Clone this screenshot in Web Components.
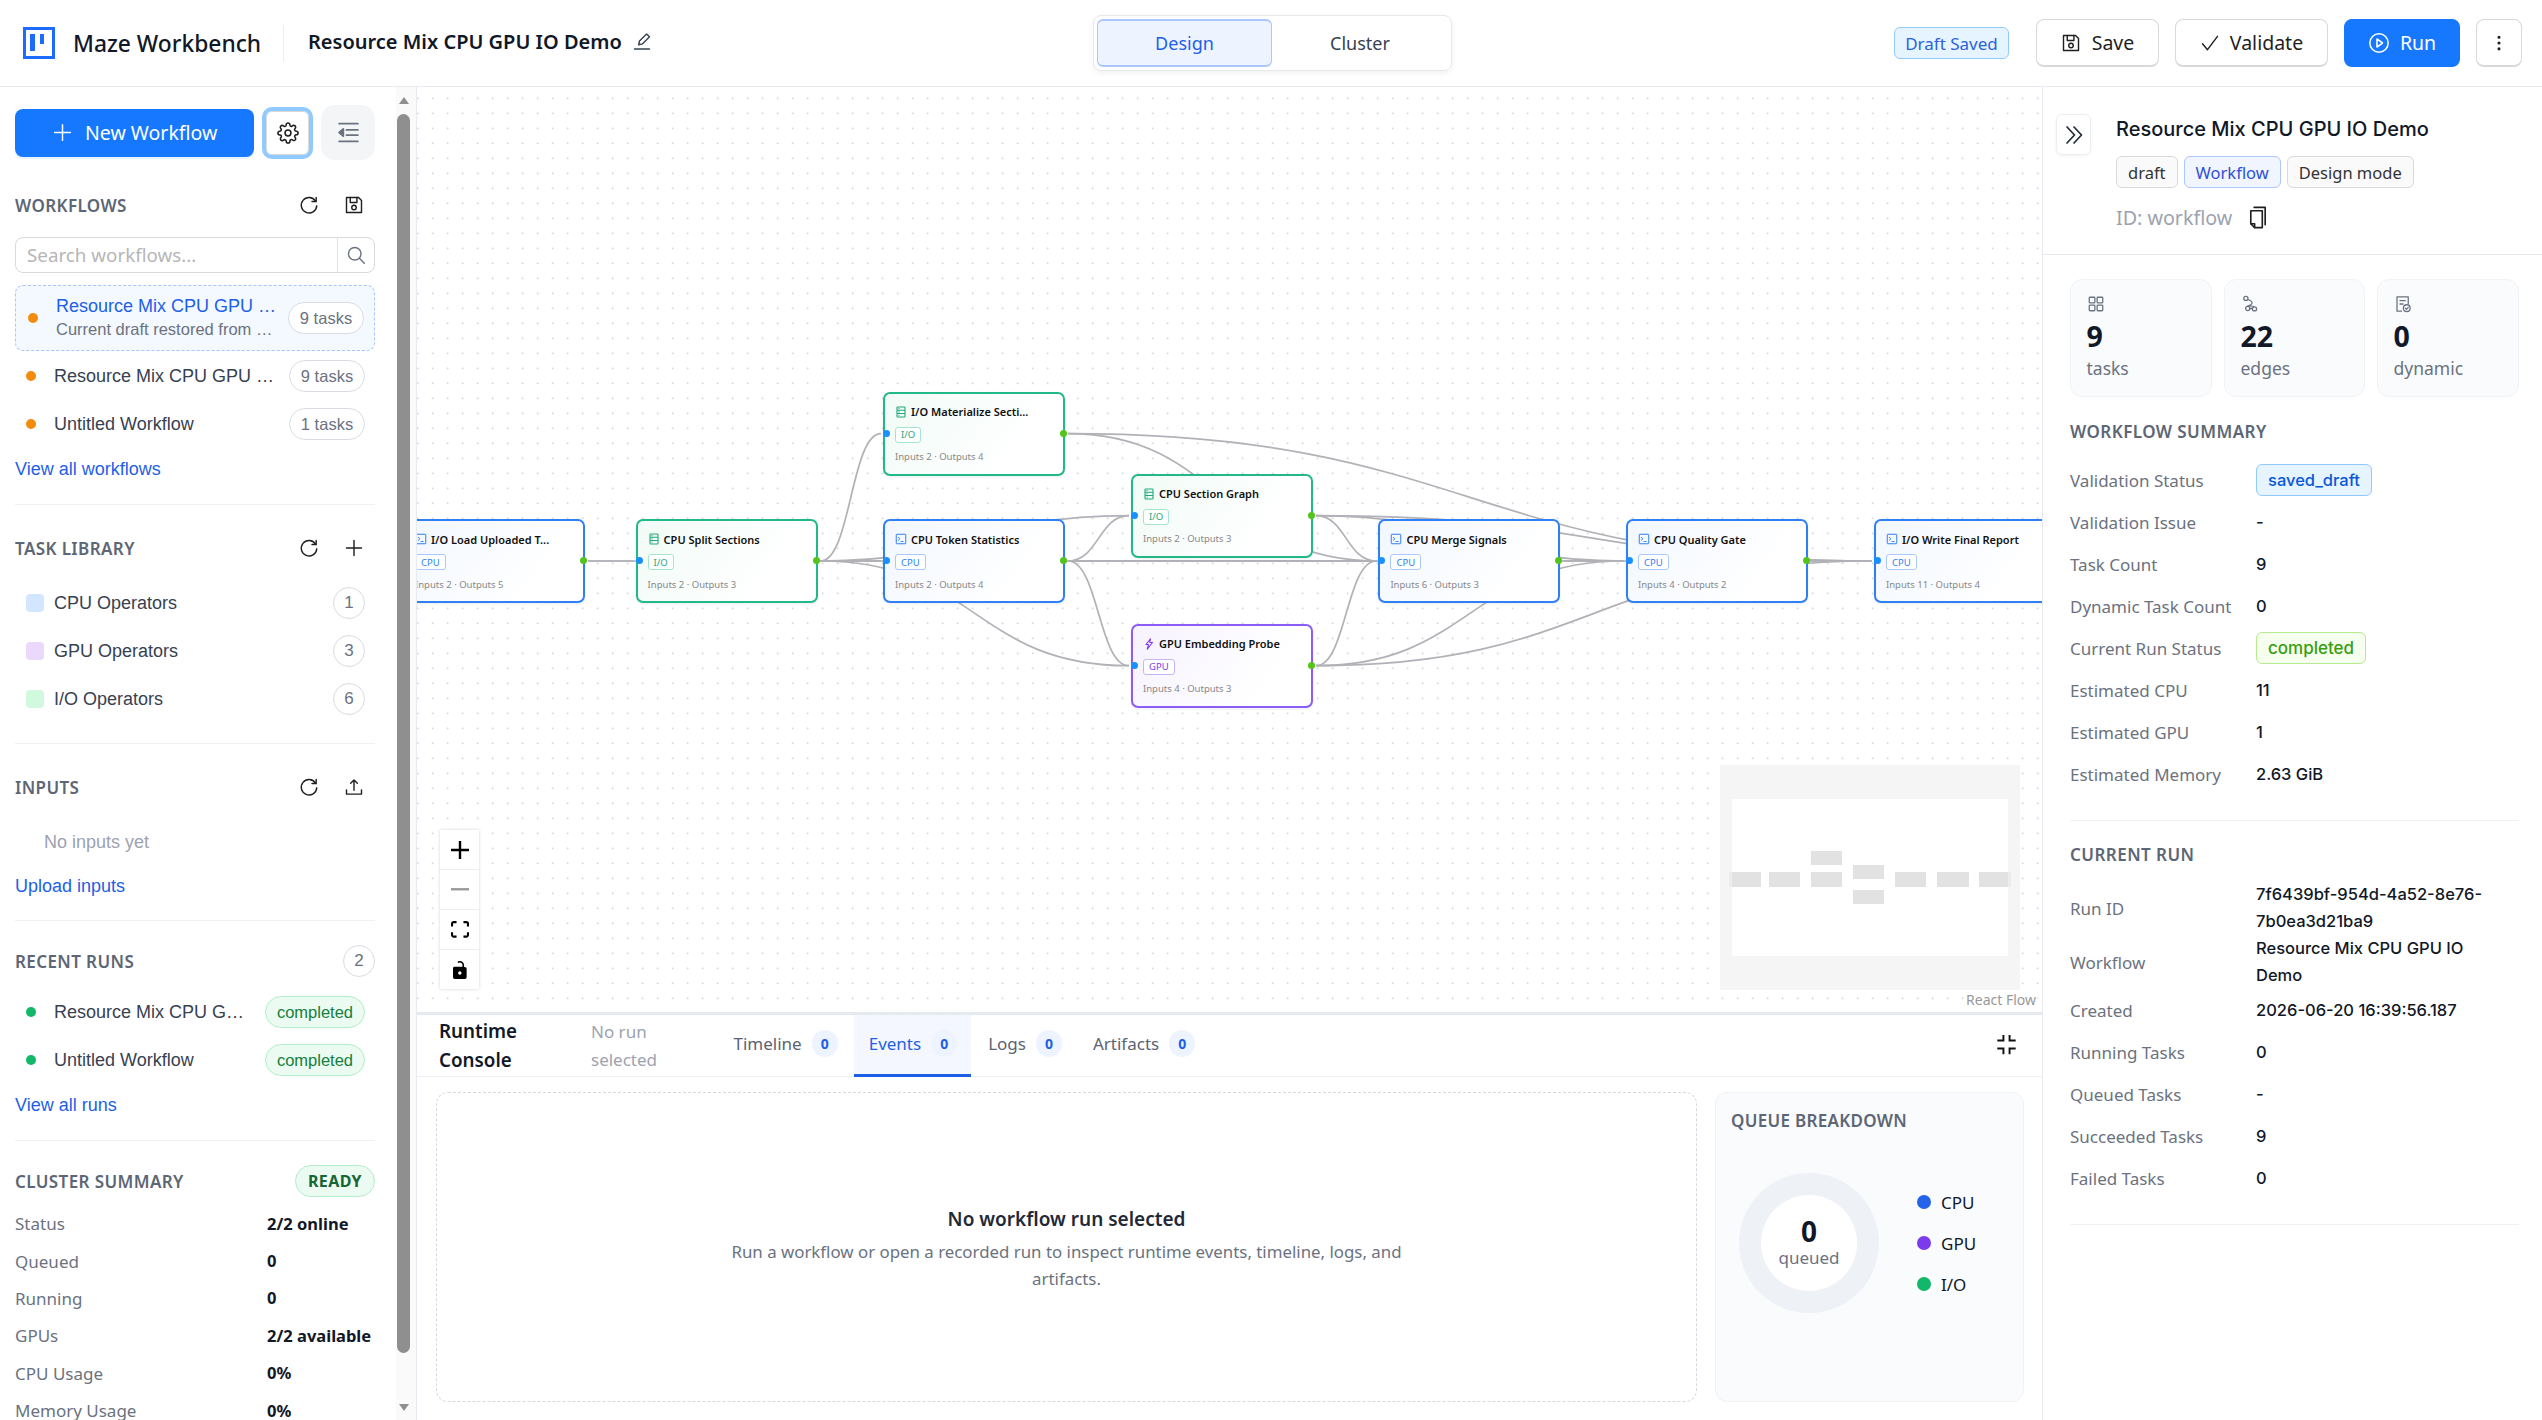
<!DOCTYPE html>
<html lang="en">
<head>
<meta charset="utf-8">
<title>Maze Workbench</title>
<style>
  html, body { margin: 0; height: 100%; overflow: hidden; background: #fff; }
  body { font-family: "Noto Sans", Arial, sans-serif; color: #111827; }
</style>
</head>
<body>
<maze-app></maze-app>
<script>
const ui = '"Noto Sans", Arial, sans-serif';
const inter = 'Inter, "Noto Sans", Arial, sans-serif';
const arial = '"Liberation Sans", Arial, sans-serif';

const svg = (body, size = 20, extra = '') =>
  `<svg width="${size}" height="${size}" viewBox="0 0 24 24" fill="none" stroke="currentColor" stroke-width="1.7" stroke-linecap="round" stroke-linejoin="round" ${extra}>${body}</svg>`;

const icons = {
  plus: s => svg('<path d="M12 3v18M3 12h18"/>', s),
  reload: s => svg('<path d="M19.8 7.2A9.3 9.3 0 1 0 21.3 13"/><path d="M20.6 2.8v5h-5" stroke-linejoin="miter"/>', s),
  save: s => svg('<path d="M3 3h14.500L21 6.500V21H3z"/><path d="M7.500 3v6h8V3"/><circle cx="12" cy="15" r="2.700"/>', s),
  gear: s => svg('<circle cx="12" cy="12" r="3.2"/><path d="M19.4 15a1.65 1.65 0 0 0 .33 1.82l.06.06a2 2 0 0 1 0 2.83 2 2 0 0 1-2.83 0l-.06-.06a1.65 1.65 0 0 0-1.82-.33 1.65 1.65 0 0 0-1 1.51V21a2 2 0 0 1-2 2 2 2 0 0 1-2-2v-.09A1.65 1.65 0 0 0 9 19.4a1.65 1.65 0 0 0-1.82.33l-.06.06a2 2 0 0 1-2.83 0 2 2 0 0 1 0-2.83l.06-.06a1.65 1.65 0 0 0 .33-1.82 1.65 1.65 0 0 0-1.51-1H3a2 2 0 0 1-2-2 2 2 0 0 1 2-2h.09A1.65 1.65 0 0 0 4.6 9a1.65 1.65 0 0 0-.33-1.82l-.06-.06a2 2 0 0 1 0-2.83 2 2 0 0 1 2.83 0l.06.06a1.65 1.65 0 0 0 1.82.33H9a1.65 1.65 0 0 0 1-1.51V3a2 2 0 0 1 2-2 2 2 0 0 1 2 2v.09a1.65 1.65 0 0 0 1 1.51 1.65 1.65 0 0 0 1.82-.33l.06-.06a2 2 0 0 1 2.83 0 2 2 0 0 1 0 2.83l-.06.06a1.65 1.65 0 0 0-.33 1.82V9a1.65 1.65 0 0 0 1.51 1H21a2 2 0 0 1 2 2 2 2 0 0 1-2 2h-.09a1.65 1.65 0 0 0-1.51 1z"/>', s),
  indent: s => svg('<path d="M3 3.500h18M10 9.500h11M10 14.500h11M3 20.500h18"/><path d="M7 8.500v7L3 12z" fill="currentColor"/>', s),
  search: s => svg('<circle cx="10.500" cy="10.500" r="7.500"/><path d="M16 16l6 6"/>', s),
  edit: s => svg('<path d="M8 16.500l1-4.500 8.500-8.500 3.500 3.500-8.500 8.500z"/><path d="M3 21.500h18"/>', s),
  upload: s => svg('<path d="M12 16V3.500M8 7.500l4-4 4 4"/><path d="M3 15.500v5h18v-5"/>', s),
  check: s => svg('<path d="M3 13l6 7L21 4"/>', s),
  play: s => svg('<circle cx="12" cy="12" r="10"/><path d="M9.800 7.600l6 4.400-6 4.400z"/>', s),
  more: s => svg('<circle cx="12" cy="5" r="1" fill="currentColor"/><circle cx="12" cy="12" r="1" fill="currentColor"/><circle cx="12" cy="19" r="1" fill="currentColor"/>', s),
  chevrons: s => svg('<path d="M5 4l7.500 8L5 20M12 4l7.500 8-7.500 8"/>', s),
  copy: s => svg('<path d="M8.500 1.500H20v18"/><path d="M5 5h12v17.500H9L5 18.500z"/><path d="M5 18.500h4v4"/>', s),
  grid: s => svg('<rect x="3" y="3" width="7.500" height="7.500" rx="1"/><rect x="13.500" y="3" width="7.500" height="7.500" rx="1"/><rect x="3" y="13.500" width="7.500" height="7.500" rx="1"/><rect x="13.500" y="13.500" width="7.500" height="7.500" rx="1"/>', s),
  branch: s => svg('<circle cx="6.500" cy="4.500" r="2.800"/><circle cx="9" cy="18" r="2.800"/><circle cx="18" cy="18.500" r="2.800"/><path d="M9 6c4 1 6.500 3 5.500 5.500s-5 2.500-6.500 4M12 18h3M11 14.500c3 0 6 .5 6 1.500"/>', s),
  doccheck: s => svg('<path d="M10 21.500H4v-19h15v9"/><path d="M8 7.500h7M8 12h4"/><circle cx="17" cy="17.500" r="4.500"/><path d="M15 17.500l1.500 1.500 2.500-2.500"/>', s),
  compress: s => svg('<path d="M8.500 1v6.500h-7M15.500 1v6.500h7M8.500 23v-6.500h-7M15.500 23v-6.500h7" stroke-linecap="butt" stroke-linejoin="miter" stroke-width="2.200"/>', s),
  rfPlus: `<svg width="18" height="18" viewBox="0 0 32 32"><path d="M32 18.133H18.133V32h-4.266V18.133H0v-4.266h13.867V0h4.266v13.867H32z"/></svg>`,
  rfMinus: `<svg width="18" height="3" viewBox="0 0 32 5" fill="#999"><path d="M0 0h32v4.200H0z"/></svg>`,
  rfFit: `<svg width="18" height="17" viewBox="0 0 32 30"><path d="M3.692 4.63c0-.53.4-.938.939-.938h5.215V0H4.708C2.13 0 0 2.054 0 4.63v5.216h3.692V4.631zM27.354 0h-5.200v3.692h5.170c.53 0 .984.4.984.939v5.215H32V4.631A4.624 4.624 0 0027.354 0zm.954 24.830c0 .532-.4.940-.939.940h-5.215v3.768h5.215c2.577 0 4.631-2.130 4.631-4.707v-5.139h-3.692v5.139zm-23.677.940c-.531 0-.939-.4-.939-.940v-5.138H0v5.139c0 2.577 2.130 4.707 4.708 4.707h5.138V25.770H4.631z"/></svg>`,
  rfUnlock: `<svg width="14" height="18" viewBox="0 0 25 32"><path d="M21.333 10.667H19.810V7.619C19.810 3.429 16.380 0 12.190 0c-1.523 0-3.047.610-4.257 1.486L9.448 3.410a4.710 4.710 0 012.743-.914c2.590 0 4.723 2.133 4.723 4.724v3.048H3.048A3.056 3.056 0 000 13.714v15.238A3.056 3.056 0 003.048 32h18.285a3.056 3.056 0 003.048-3.048V13.714a3.056 3.056 0 00-3.048-3.047zM12.190 24.533a3.056 3.056 0 01-3.047-3.047 3.056 3.056 0 013.047-3.048 3.056 3.056 0 013.048 3.048 3.056 3.056 0 01-3.048 3.047z"/></svg>`,
  code: s => `<svg width="${s}" height="${s}" viewBox="0 0 24 24" fill="none" stroke="currentColor" stroke-width="2"><rect x="2.500" y="2.500" width="19" height="19" rx="1"/><path d="M6 8l4 3.500L6 15M11 17h6" stroke-width="1.800"/></svg>`,
  db: s => `<svg width="${s}" height="${s}" viewBox="0 0 24 24" fill="none" stroke="currentColor" stroke-width="2.200"><rect x="4" y="2" width="16" height="20" rx="1.500"/><path d="M4 8.500h16M4 15h16"/><path d="M7 5.200h2M7 11.800h2M7 18.500h2"/></svg>`,
  bolt: s => `<svg width="${s}" height="${s}" viewBox="0 0 24 24" fill="none" stroke="currentColor" stroke-width="2.200" stroke-linejoin="round"><path d="M15 1.500L6 13h5l-2.500 9.500L19 9h-5.500z"/></svg>`,
};

class AppHeader extends HTMLElement {
  constructor() {
    super();
    this.attachShadow({ mode: 'open' });
    this.shadowRoot.innerHTML = `
      <style>
        :host { display: flex; align-items: center; height: 86px; border-bottom: 1px solid #e8eaf0; font-family: ${ui}; box-sizing: content-box; position: relative; }
        .logo { margin-left: 23px; width: 32px; height: 32px; flex: none; display: block; }
        .brand { margin-left: 18px; font-size: 22.800px; font-weight: 500; color: #111827; white-space: nowrap; width: 210px; }
        .sep { width: 1px; height: 37px; background: #eceef2; margin-right: 24px; }
        .title { font-size: 20px; font-weight: 600; color: #111827; white-space: nowrap; margin-top: -4px; }
        .pen { margin-left: 10px; color: #374151; display: flex; margin-top: -4px; }
        .left { display: flex; align-items: center; width: 1093px; flex: none; }
        .seg { display: flex; width: 359px; height: 56px; box-sizing: border-box; border: 1px solid #e6e8ec; border-radius: 8px; padding: 3px; box-shadow: 0 2px 6px rgba(0,0,0,.06); flex: none; margin-top: -1px; }
        .seg span { flex: 1; display: flex; align-items: center; justify-content: center; font-size: 18px; color: #374151; }
        .seg .on { flex: none; width: 175px; background: #edf3ff; border: 1px solid #adc6ff; border-top-width: 2px; border-bottom-width: 2px; border-radius: 6px; color: #1d5fe8; box-sizing: border-box; }
        .right { display: flex; align-items: center; margin-left: 442px; }
        .draft { height: 32px; width: 115px; box-sizing: border-box; display: flex; align-items: center; justify-content: center; background: #e6f4ff; border: 1px solid #91caff; border-radius: 6px; color: #2c62e0; font-size: 17px; margin-right: 27px; white-space: nowrap; }
        .btn { height: 48px; box-sizing: border-box; display: flex; align-items: center; justify-content: center; gap: 10px; border: 1px solid #d9d9d9; border-bottom-width: 2px; border-radius: 8px; background: #fff; font-size: 19.500px; color: #1f1f1f; margin-right: 16px; white-space: nowrap; }
        .btn.primary { background: #1677ff; border-color: #1677ff; color: #fff; }
      </style>
      <div class="left">
        <svg class="logo" viewBox="0 0 32 32"><rect x="1.500" y="1.500" width="29" height="29" fill="#fff" stroke="#1d6bff" stroke-width="3"/><rect x="7" y="7" width="5" height="17" fill="#1d6bff"/><rect x="17" y="7" width="4" height="10" fill="#1d6bff"/></svg>
        <div class="brand">Maze Workbench</div>
        <div class="sep"></div>
        <div class="title">Resource Mix CPU GPU IO Demo</div>
        <div class="pen">${icons.edit(20)}</div>
      </div>
      <div class="seg"><span class="on">Design</span><span>Cluster</span></div>
      <div class="right">
        <div class="draft">Draft Saved</div>
        <div class="btn" style="width:123px;gap:11px">${icons.save(20)}<span>Save</span></div>
        <div class="btn" style="width:153px">${icons.check(20)}<span>Validate</span></div>
        <div class="btn primary" style="width:116px">${icons.play(22)}<span>Run</span></div>
        <div class="btn" style="width:46px;margin:0">${icons.more(20)}</div>
      </div>
    `;
  }
}
customElements.define('app-header', AppHeader);

class SideSection extends HTMLElement {
  constructor() {
    super();
    this.attachShadow({ mode: 'open' });
    this.shadowRoot.innerHTML = `
      <style>
        :host { display: block; padding: var(--pt, 24px) 0 var(--pb, 23px); border-bottom: 1px solid #eff1f5; font-family: ${ui}; }
        :host([last]) { border-bottom: 0; }
        .head { display: flex; align-items: center; justify-content: space-between; height: 32px; margin-bottom: var(--gap, 14px); }
        h3 { margin: 0; font-size: 17px; font-weight: 600; letter-spacing: .4px; color: #5d6675; white-space: nowrap; }
        .acts { display: flex; align-items: center; }
      </style>
      <div class="head"><h3>${this.getAttribute('heading')}</h3><div class="acts"><slot name="actions"></slot></div></div>
      <slot></slot>
    `;
  }
}
customElements.define('side-section', SideSection);

class IconActions extends HTMLElement {
  constructor() {
    super();
    this.attachShadow({ mode: 'open' });
    const second = icons[this.getAttribute('second')](this.getAttribute('second') === 'save' ? 24 : 20);
    this.shadowRoot.innerHTML = `
      <style>
        :host { display: flex; align-items: center; color: #1f1f1f; margin-right: 11px; }
        span { display: flex; width: 20px; height: 20px; align-items: center; justify-content: center; }
        span + span { margin-left: 25px; }
      </style>
      <span>${icons.reload(20)}</span><span>${second}</span>
    `;
  }
}
customElements.define('icon-actions', IconActions);

class UiPill extends HTMLElement {
  constructor() {
    super();
    this.attachShadow({ mode: 'open' });
    this.shadowRoot.innerHTML = `
      <style>
        :host { display: inline-flex; align-items: center; justify-content: center; height: 32px; min-width: 32px; box-sizing: border-box; border: 1px solid #d9dce3; border-radius: 16px; background: #fff; color: #6b7280; font: 16.500px ${arial}; white-space: nowrap; flex: none; }
        :host([tone="round"]) { color: #6b7280; font-size: 17px; }
        :host([tone="ok"]) { background: #ebfbf2; border-color: #b4edca; color: #15803d; }
        :host([tone="ready"]) { background: #ebfbf2; border-color: #b4edca; color: #166534; font: 700 16px ${ui}; letter-spacing: .4px; }
      </style><slot></slot>
    `;
  }
}
customElements.define('ui-pill', UiPill);

class SideRow extends HTMLElement {
  constructor() {
    super();
    this.attachShadow({ mode: 'open' });
    const swatch = this.getAttribute('swatch');
    const dot = this.getAttribute('dot');
    const lead = swatch
      ? `<i style="width:18px;height:18px;border-radius:4px;background:${swatch};margin-right:10px"></i>`
      : `<i style="width:10px;height:10px;border-radius:50%;background:${dot};margin-right:18px"></i>`;
    this.shadowRoot.innerHTML = `
      <style>
        :host { display: flex; align-items: center; height: 48px; padding: 0 10px 0 11px; box-sizing: border-box; font: 18px ${arial}; color: #374151; }
        :host([selected]) { height: 66px; border: 1px dashed #a9c4fb; border-radius: 8px; background: #f4f8ff; padding: 0 10px 0 12px; margin-top: 12px; margin-bottom: 1px; }
        :host([selected]) i { margin-right: 18px !important; }
        :host([selected]) .txt { padding-bottom: 2px; }
        i { flex: none; }
        .txt { flex: 1; min-width: 0; display: flex; flex-direction: column; white-space: nowrap; }
        .name { line-height: 24px; }
        :host([selected]) .name { color: #1d5fe8; }
      </style>
      ${lead}
      <div class="txt"><div class="name"><slot></slot></div><slot name="sub"></slot></div>
      <slot name="end"></slot>
    `;
  }
}
customElements.define('side-row', SideRow);

class TextLink extends HTMLElement {
  constructor() {
    super();
    this.attachShadow({ mode: 'open' });
    this.shadowRoot.innerHTML = `
      <style>:host { display: block; margin-top: 9px; color: #1d5fe8; font: 18px/24px ${arial}; white-space: nowrap; }</style>
      <slot></slot>
    `;
  }
}
customElements.define('text-link', TextLink);

class KvRow extends HTMLElement {
  constructor() {
    super();
    this.attachShadow({ mode: 'open' });
    this.shadowRoot.innerHTML = `
      <style>
        :host { display: grid; grid-template-columns: var(--label-w, 186px) 1fr; align-items: center; min-height: var(--row-h, 42px); font-family: ${ui}; }
        .k { color: #6b7280; font-size: 17px; white-space: nowrap; }
        .v { color: #111827; font: var(--value-font, 500 16.500px/27px ${inter}); padding-right: var(--value-pad, 0px); }
      </style>
      <div class="k">${this.getAttribute('label')}</div>
      <div class="v"><slot></slot></div>
    `;
  }
}
customElements.define('kv-row', KvRow);

class SideBar extends HTMLElement {
  constructor() {
    super();
    this.attachShadow({ mode: 'open' });
    this.shadowRoot.innerHTML = `
      <style>
        :host { display: flex; height: 100%; overflow: hidden; border-right: 1px solid #e8eaf2; font-family: ${ui}; }
        .content { width: 360px; padding: 18px 21px 0 15px; overflow: hidden; flex: none; }
        .bar { width: 20px; background: #fafafa; flex: none; display: flex; flex-direction: column; align-items: center; position: relative; }
        .up, .down { width: 0; height: 0; border-left: 5.500px solid transparent; border-right: 5.500px solid transparent; margin-left: -5px; }
        .up { border-bottom: 7px solid #8f8f8f; margin-top: 10px; }
        .thumb { width: 13px; height: 1239px; border-radius: 7px; background: #8f8f8f; margin-top: 10px; margin-left: -5px; }
        .down { border-top: 7px solid #8f8f8f; margin-top: 51px; }
        .tools { display: flex; align-items: center; height: 55px; }
        .new { width: 240px; height: 48px; box-sizing: border-box; background: #1677ff; color: #fff; border-radius: 8px; display: flex; align-items: center; justify-content: center; gap: 12px; font-size: 19.500px; box-shadow: 0 2px 0 rgba(5,145,255,.1); }
        .gear { width: 43px; height: 44px; margin-left: 12px; border: 1px solid #d9d9d9; border-radius: 6px; background: #fff; display: flex; align-items: center; justify-content: center; outline: 4px solid #91caff; color: #1f1f1f; box-sizing: border-box; }
        .fold { width: 54px; height: 55px; margin-left: 12px; border-radius: 14px; background: #f4f5f7; display: flex; align-items: center; justify-content: center; color: #6b7280; }
        .search { display: flex; height: 36px; border: 1px solid #d9d9d9; border-radius: 8px; box-sizing: border-box; align-items: center; color: #b6b6b6; font-size: 18.800px; }
        .search span { flex: 1; padding-left: 11px; white-space: nowrap; }
        .search b { width: 36px; height: 34px; border-left: 1px solid #e3e3e3; display: flex; align-items: center; justify-content: center; color: #6b7280; }
        .sub { font: 16.500px/22px ${arial}; color: #6b7280; }
        .empty { margin: 27px 0 0 29px; height: 24px; font: 18px/24px ${arial}; color: #9ca3af; }
        .cluster { --label-w: 252px; --row-h: 37.400px; --value-font: 700 16.500px/24px ${ui}; }
      </style>
      <div class="content">
        <div class="tools">
          <div class="new">${icons.plus(21)}<span>New Workflow</span></div>
          <div class="gear">${icons.gear(22)}</div>
          <div class="fold">${icons.indent(25)}</div>
        </div>
        <side-section heading="WORKFLOWS" style="--pt:29px;--pb:23px;--gap:16px">
          <icon-actions slot="actions" second="save"></icon-actions>
          <div class="search"><span>Search workflows...</span><b>${icons.search(20)}</b></div>
          <side-row selected dot="#f28c0f">Resource Mix CPU GPU …<div slot="sub" class="sub">Current draft restored from …</div><ui-pill slot="end" style="width:76px">9 tasks</ui-pill></side-row>
          <side-row dot="#f28c0f">Resource Mix CPU GPU …<ui-pill slot="end" style="width:76px">9 tasks</ui-pill></side-row>
          <side-row dot="#f28c0f">Untitled Workflow<ui-pill slot="end" style="width:76px">1 tasks</ui-pill></side-row>
          <text-link>View all workflows</text-link>
        </side-section>
        <side-section heading="TASK LIBRARY" style="--pt:27px;--pb:20px;--gap:15px">
          <icon-actions slot="actions" second="plus"></icon-actions>
          <side-row swatch="#d2e7ff">CPU Operators<ui-pill slot="end" tone="round">1</ui-pill></side-row>
          <side-row swatch="#ead9fb">GPU Operators<ui-pill slot="end" tone="round">3</ui-pill></side-row>
          <side-row swatch="#d1f9e0">I/O Operators<ui-pill slot="end" tone="round">6</ui-pill></side-row>
        </side-section>
        <side-section heading="INPUTS" style="--pt:27px;--pb:22px;--gap:0px">
          <icon-actions slot="actions" second="upload"></icon-actions>
          <div class="empty">No inputs yet</div>
          <text-link style="margin-top:20px">Upload inputs</text-link>
        </side-section>
        <side-section heading="RECENT RUNS" style="--pt:24px;--pb:23px;--gap:11px">
          <ui-pill slot="actions" tone="round">2</ui-pill>
          <side-row dot="#12b76a">Resource Mix CPU G…<ui-pill slot="end" tone="ok" style="width:100px">completed</ui-pill></side-row>
          <side-row dot="#12b76a">Untitled Workflow<ui-pill slot="end" tone="ok" style="width:100px">completed</ui-pill></side-row>
          <text-link>View all runs</text-link>
        </side-section>
        <side-section last heading="CLUSTER SUMMARY" style="--pt:24px;--pb:0px;--gap:8px" class="cluster">
          <ui-pill slot="actions" tone="ready" style="width:80px">READY</ui-pill>
          <kv-row label="Status">2/2 online</kv-row>
          <kv-row label="Queued">0</kv-row>
          <kv-row label="Running">0</kv-row>
          <kv-row label="GPUs">2/2 available</kv-row>
          <kv-row label="CPU Usage">0%</kv-row>
          <kv-row label="Memory Usage">0%</kv-row>
        </side-section>
      </div>
      <div class="bar"><div class="up"></div><div class="thumb"></div><div class="down"></div></div>
    `;
  }
}
customElements.define('side-bar', SideBar);

class FlowNode extends HTMLElement {
  constructor() {
    super();
    this.attachShadow({ mode: 'open' });
    const kind = this.getAttribute('kind');
    const theme = {
      cpu: ['#2f7ff5', '#f2f7ff', '#2f7ff5', '#a9c8fb', icons.code(12)],
      io: ['#22b98a', '#f1fbf6', '#22a87e', '#a5e5cf', icons.db(12)],
      gpu: ['#8b5cf6', '#f6f2ff', '#7c3aed', '#c9b3f7', icons.bolt(12)],
    }[kind];
    this.shadowRoot.innerHTML = `
      <style>
        :host { position: absolute; left: var(--x); top: var(--y); width: 182px; height: 84px; box-sizing: border-box; border: 2px solid ${theme[0]}; border-radius: 7px; background: linear-gradient(125deg, ${theme[1]}, #fff 75%); padding: 10px 0 0 10px; font-family: ${ui}; box-shadow: 0 1px 3px rgba(0,0,0,.08); }
        .title { display: flex; align-items: center; gap: 4px; height: 16px; font-size: 11px; font-weight: 600; color: #111; white-space: nowrap; }
        .title span { display: flex; color: ${theme[2]}; }
        .tag { display: inline-flex; align-items: center; height: 16px; padding: 0 5px; margin-top: 7px; border: 1px solid ${theme[3]}; border-radius: 3px; background: #fff; box-sizing: border-box; font-size: 9.500px; color: ${theme[2]}; }
        .meta { margin-top: 7px; height: 14px; line-height: 14px; font-size: 9.500px; color: #888; white-space: nowrap; }
        .h { position: absolute; width: 7px; height: 7px; border-radius: 50%; top: 36px; }
        .in { left: -2px; background: #1890ff; }
        .out { right: -4px; background: #52c41a; }
      </style>
      <div class="title"><span>${theme[4]}</span><slot></slot></div>
      <div class="tag">${this.getAttribute('tag')}</div>
      <div class="meta">${this.getAttribute('meta')}</div>
      <i class="h in"></i><i class="h out"></i>
    `;
  }
}
customElements.define('flow-node', FlowNode);

const NODES = {
  load: { x: -14, y: 432, kind: 'cpu', tag: 'CPU', meta: 'Inputs 2 · Outputs 5', title: 'I/O Load Uploaded T...' },
  split: { x: 218.6, y: 432, kind: 'io', tag: 'I/O', meta: 'Inputs 2 · Outputs 3', title: 'CPU Split Sections' },
  mat: { x: 466, y: 304.7, kind: 'io', tag: 'I/O', meta: 'Inputs 2 · Outputs 4', title: 'I/O Materialize Secti...' },
  token: { x: 466, y: 432, kind: 'cpu', tag: 'CPU', meta: 'Inputs 2 · Outputs 4', title: 'CPU Token Statistics' },
  graph: { x: 714, y: 386.7, kind: 'io', tag: 'I/O', meta: 'Inputs 2 · Outputs 3', title: 'CPU Section Graph' },
  gpu: { x: 714, y: 536.7, kind: 'gpu', tag: 'GPU', meta: 'Inputs 4 · Outputs 3', title: 'GPU Embedding Probe' },
  merge: { x: 961.4, y: 432, kind: 'cpu', tag: 'CPU', meta: 'Inputs 6 · Outputs 3', title: 'CPU Merge Signals' },
  quality: { x: 1209, y: 432, kind: 'cpu', tag: 'CPU', meta: 'Inputs 4 · Outputs 2', title: 'CPU Quality Gate' },
  final: { x: 1457, y: 432, kind: 'cpu', tag: 'CPU', meta: 'Inputs 11 · Outputs 4', title: 'I/O Write Final Report' },
};

const EDGES = [
  ['load', 'split'], ['split', 'mat'], ['split', 'token'], ['split', 'graph'], ['split', 'gpu'], ['split', 'merge'],
  ['token', 'graph'], ['token', 'merge'], ['token', 'gpu'], ['token', 'quality'],
  ['mat', 'merge'], ['mat', 'final'], ['graph', 'merge'], ['graph', 'quality'], ['graph', 'final'],
  ['merge', 'quality'], ['merge', 'final'], ['gpu', 'merge'], ['gpu', 'quality'], ['gpu', 'final'], ['quality', 'final'], ['load', 'token'],
];

function edgePath([a, b]) {
  const s = NODES[a], t = NODES[b];
  const sx = s.x + 185, sy = s.y + 42, tx = t.x - 2, ty = t.y + 42;
  const mx = (sx + tx) / 2;
  return `M${sx},${sy} C${mx},${sy} ${mx},${ty} ${tx},${ty}`;
}

class FlowCanvas extends HTMLElement {
  constructor() {
    super();
    this.attachShadow({ mode: 'open' });
    const mini = [[1729,872,32,15],[1769,872,31,15],[1811,851,31,14],[1811,872,31,15],[1853,865,31,14],[1853,890,31,14],[1895,872,31,15],[1937,872,32,15],[1979,872,32,15]];
    this.shadowRoot.innerHTML = `
      <style>
        :host { display: block; position: relative; overflow: hidden; background-color: #fff; background-image: radial-gradient(circle, #c8c8c8 .75px, transparent 1.100px); background-size: 15px 15px; background-position: -6.800px 3.800px; }
        .edges { position: absolute; left: 0; top: 0; width: 100%; height: 100%; }
        .edges path { fill: none; stroke: #b1b1b7; stroke-width: 1.700; }
        .controls { position: absolute; left: 23px; top: 743px; width: 39px; background: #fff; box-shadow: 0 0 3px rgba(0,0,0,.18); }
        .controls div { height: 39px; display: flex; align-items: center; justify-content: center; border-bottom: 1px solid #eee; }
        .controls div:last-child { border-bottom: 0; }
        .mini { position: absolute; left: 1303px; top: 678px; }
        .attr { position: absolute; right: 4px; bottom: 2px; padding: 0 2px; background: rgba(255,255,255,.6); font-size: 14px; line-height: 20px; color: #999; }
      </style>
      <svg class="edges">${EDGES.map(e => `<path d="${edgePath(e)}"/>`).join('')}</svg>
      ${Object.values(NODES).map(n => `<flow-node kind="${n.kind}" tag="${n.tag}" meta="${n.meta}" style="--x:${n.x}px;--y:${n.y}px">${n.title}</flow-node>`).join('')}
      <div class="controls">
        <div>${icons.rfPlus}</div>
        <div>${icons.rfMinus}</div>
        <div>${icons.rfFit}</div>
        <div>${icons.rfUnlock}</div>
      </div>
      <svg class="mini" width="300" height="225" viewBox="1720 765 300 225">
        <rect x="1720" y="765" width="300" height="225" fill="#f5f5f5"/>
        <rect x="1732" y="799" width="276" height="157" fill="#fff"/>
        ${mini.map(m => `<rect x="${m[0]}" y="${m[1]}" width="${m[2]}" height="${m[3]}" fill="#e2e2e2"/>`).join('')}
        <path fill-rule="evenodd" d="M1720 765h300v225h-300zM1732 799v157h276v-157z" fill="#f5f5f5" fill-opacity=".5"/>
      </svg>
      <div class="attr">React Flow</div>
    `;
  }
}
customElements.define('flow-canvas', FlowCanvas);

class ConsoleTab extends HTMLElement {
  constructor() {
    super();
    this.attachShadow({ mode: 'open' });
    this.shadowRoot.innerHTML = `
      <style>
        :host { display: flex; align-items: center; gap: 10px; height: 62px; box-sizing: border-box; padding: 0 13.500px 2px 14.500px; margin-right: 3px; font-size: 17px; color: #5b6472; white-space: nowrap; border-bottom: 3px solid transparent; }
        :host([active]) { background: #f4f7ff; color: #1d5fe8; border-bottom-color: #1d5fe8; }
        b { display: flex; align-items: center; justify-content: center; width: 26px; height: 27px; border-radius: 14px; background: #eef4ff; color: #1d5fe8; font-size: 14px; font-weight: 700; }
      </style>
      <slot></slot><b>0</b>
    `;
  }
}
customElements.define('console-tab', ConsoleTab);

class RuntimeConsole extends HTMLElement {
  constructor() {
    super();
    this.attachShadow({ mode: 'open' });
    this.shadowRoot.innerHTML = `
      <style>
        :host { display: flex; flex-direction: column; height: 408px; box-sizing: border-box; border-top: 3px solid #e5e9f0; font-family: ${ui}; }
        .bar { display: flex; align-items: stretch; height: 62px; flex: none; box-sizing: border-box; box-shadow: inset 0 -1px 0 #eef0f4; }
        .name { width: 174px; padding: 2px 70px 0 22px; box-sizing: border-box; font-size: 18.800px; font-weight: 600; line-height: 28.500px; color: #111827; flex: none; }
        .name2 { width: 128px; font-size: 17px; line-height: 28px; padding-top: 3px; color: #9ca3af; flex: none; }
        .fold { margin-left: auto; margin-right: 25px; display: flex; align-items: center; color: #111; padding-bottom: 3px; }
        .body { flex: 1; display: flex; gap: 18px; padding: 15px 18px 18px 19px; min-height: 0; }
        .empty { flex: 1; border: 1px dashed #d5d8de; border-radius: 12px; display: flex; flex-direction: column; align-items: center; justify-content: center; text-align: center; padding-top: 3px; }
        .empty h4 { margin: 0; font-size: 19px; font-weight: 600; color: #1f2937; line-height: 27px; }
        .empty p { margin: 5px 0 0; width: 700px; font-size: 16.850px; line-height: 27px; color: #6b7280; }
        .queue { width: 309px; flex: none; box-sizing: border-box; border: 1px solid #f0f2f5; border-radius: 12px; background: #fafbfd; padding: 16px 15px; }
        .queue h3 { margin: 0; font-size: 17px; font-weight: 600; letter-spacing: .3px; line-height: 24px; color: #5d6675; }
        .row { display: flex; align-items: center; margin: 40px 0 0 8px; }
        .donut { width: 140px; height: 140px; border-radius: 50%; background: #eef1f5; display: flex; align-items: center; justify-content: center; flex: none; }
        .hole { width: 96px; height: 96px; border-radius: 50%; background: #fff; display: flex; flex-direction: column; align-items: center; justify-content: center; }
        .hole b { font-size: 28px; line-height: 30px; color: #111827; }
        .hole span { font-size: 17px; line-height: 24px; color: #6b7280; }
        ul { list-style: none; margin: 0 0 0 38px; padding: 0; font-size: 17px; color: #111827; }
        li { display: flex; align-items: center; height: 41px; gap: 10px; }
        li i { width: 14px; height: 14px; border-radius: 50%; }
      </style>
      <div class="bar">
        <div class="name">Runtime Console</div>
        <div class="name2">No run<br>selected</div>
        <console-tab>Timeline</console-tab>
        <console-tab active>Events</console-tab>
        <console-tab>Logs</console-tab>
        <console-tab>Artifacts</console-tab>
        <div class="fold">${icons.compress(21)}</div>
      </div>
      <div class="body">
        <div class="empty">
          <h4>No workflow run selected</h4>
          <p>Run a workflow or open a recorded run to inspect runtime events, timeline, logs, and artifacts.</p>
        </div>
        <div class="queue">
          <h3>QUEUE BREAKDOWN</h3>
          <div class="row">
            <div class="donut"><div class="hole"><b>0</b><span>queued</span></div></div>
            <ul>
              <li><i style="background:#2563eb"></i>CPU</li>
              <li><i style="background:#7c3aed"></i>GPU</li>
              <li><i style="background:#12b76a"></i>I/O</li>
            </ul>
          </div>
        </div>
      </div>
    `;
  }
}
customElements.define('runtime-console', RuntimeConsole);

class StatCard extends HTMLElement {
  constructor() {
    super();
    this.attachShadow({ mode: 'open' });
    this.shadowRoot.innerHTML = `
      <style>
        :host { display: block; height: 118px; box-sizing: border-box; border: 1px solid #f1f3f7; border-radius: 12px; background: #fafbfd; padding: 15px 15.500px; font-family: ${ui}; }
        .i { height: 18px; color: #6b7280; display: flex; }
        .n { font: 700 28.500px/36px ${ui}; color: #111827; margin-top: 5px; }
        .l { font-size: 17.500px; line-height: 26px; color: #6b7280; margin-top: 1px; }
      </style>
      <div class="i">${icons[this.getAttribute('icon')](18)}</div>
      <div class="n">${this.getAttribute('value')}</div>
      <div class="l">${this.getAttribute('label')}</div>
    `;
  }
}
customElements.define('stat-card', StatCard);

class TagChip extends HTMLElement {
  constructor() {
    super();
    this.attachShadow({ mode: 'open' });
    this.shadowRoot.innerHTML = `
      <style>
        :host { display: inline-flex; align-items: center; justify-content: center; height: 32px; box-sizing: border-box; padding: 0 11px; border: 1px solid #d9d9d9; border-radius: 6px; background: #fafafa; color: #333; font: 16.500px ${ui}; white-space: nowrap; }
        :host([tone="blue"]) { background: #f0f5ff; border-color: #adc6ff; color: #2f4fd8; }
        :host([tone="cyan"]) { background: #e6f4ff; border-color: #91caff; color: #0958d9; font: 500 16.500px ${inter}; }
        :host([tone="green"]) { background: #f6ffed; border-color: #b7eb8f; color: #389e0d; font: 500 17px ${inter}; }
      </style><slot></slot>
    `;
  }
}
customElements.define('tag-chip', TagChip);

class InspectorPanel extends HTMLElement {
  constructor() {
    super();
    this.attachShadow({ mode: 'open' });
    this.shadowRoot.innerHTML = `
      <style>
        :host { display: block; height: 100%; overflow: hidden; border-left: 1px solid #e8eaf2; box-sizing: border-box; font-family: ${ui}; background: #fff; --value-pad: 20px; }
        .head { display: flex; padding: 27px 0 24px 13px; border-bottom: 1px solid #e8eaf0; }
        .toggle { width: 35px; height: 41px; border: 1px solid #eceef2; border-radius: 6px; box-shadow: 0 1px 3px rgba(0,0,0,.06); display: flex; align-items: center; justify-content: center; color: #1f2937; margin-right: 25px; box-sizing: border-box; flex: none; }
        h2 { margin: 0; font: 500 20px/30px ${inter}; color: #111827; white-space: nowrap; }
        .tags { display: flex; gap: 6px; margin-top: 12px; }
        .id { display: flex; align-items: center; height: 26px; margin-top: 16px; font-size: 19.700px; color: #9ca3af; white-space: nowrap; }
        .id span { margin-left: 14px; color: #1f1f1f; display: flex; }
        .body { padding: 0 23px 0 27px; }
        .stats { display: grid; grid-template-columns: 142px 141px 142px; gap: 12px; margin-top: 24px; }
        h3 { margin: 24px 0 16px; font-size: 17px; font-weight: 600; letter-spacing: .45px; line-height: 22px; color: #5d6675; }
        hr { border: 0; border-top: 1px solid #eff1f5; margin: 25px 0 0; }
        .run h3 { margin: 23px 0 15px; }
      </style>
      <div class="head">
        <div class="toggle">${icons.chevrons(24)}</div>
        <div>
          <h2>Resource Mix CPU GPU IO Demo</h2>
          <div class="tags"><tag-chip>draft</tag-chip><tag-chip tone="blue">Workflow</tag-chip><tag-chip>Design mode</tag-chip></div>
          <div class="id">ID: workflow<span>${icons.copy(23)}</span></div>
        </div>
      </div>
      <div class="body">
        <div class="stats">
          <stat-card icon="grid" value="9" label="tasks"></stat-card>
          <stat-card icon="branch" value="22" label="edges"></stat-card>
          <stat-card icon="doccheck" value="0" label="dynamic"></stat-card>
        </div>
        <h3>WORKFLOW SUMMARY</h3>
        <kv-row label="Validation Status"><tag-chip tone="cyan">saved_draft</tag-chip></kv-row>
        <kv-row label="Validation Issue">-</kv-row>
        <kv-row label="Task Count">9</kv-row>
        <kv-row label="Dynamic Task Count">0</kv-row>
        <kv-row label="Current Run Status"><tag-chip tone="green">completed</tag-chip></kv-row>
        <kv-row label="Estimated CPU">11</kv-row>
        <kv-row label="Estimated GPU">1</kv-row>
        <kv-row label="Estimated Memory">2.63 GiB</kv-row>
        <hr>
        <div class="run">
          <h3>CURRENT RUN</h3>
          <kv-row label="Run ID">7f6439bf-954d-4a52-8e76-7b0ea3d21ba9</kv-row>
          <kv-row label="Workflow">Resource Mix CPU GPU IO Demo</kv-row>
          <kv-row label="Created">2026-06-20 16:39:56.187</kv-row>
          <kv-row label="Running Tasks">0</kv-row>
          <kv-row label="Queued Tasks">-</kv-row>
          <kv-row label="Succeeded Tasks">9</kv-row>
          <kv-row label="Failed Tasks">0</kv-row>
        </div>
        <hr>
      </div>
    `;
  }
}
customElements.define('inspector-panel', InspectorPanel);

class MazeApp extends HTMLElement {
  constructor() {
    super();
    this.attachShadow({ mode: 'open' });
    this.shadowRoot.innerHTML = `
      <style>
        :host { display: grid; grid-template-rows: 87px 1fr; height: 100vh; overflow: hidden; }
        .cols { display: grid; grid-template-columns: 417px 1fr 500px; min-height: 0; }
        .mid { display: flex; flex-direction: column; min-width: 0; min-height: 0; }
        flow-canvas { flex: 1; min-height: 0; }
      </style>
      <app-header></app-header>
      <div class="cols">
        <side-bar></side-bar>
        <div class="mid"><flow-canvas></flow-canvas><runtime-console></runtime-console></div>
        <inspector-panel></inspector-panel>
      </div>
    `;
  }
}
customElements.define('maze-app', MazeApp);
</script>
</body>
</html>
